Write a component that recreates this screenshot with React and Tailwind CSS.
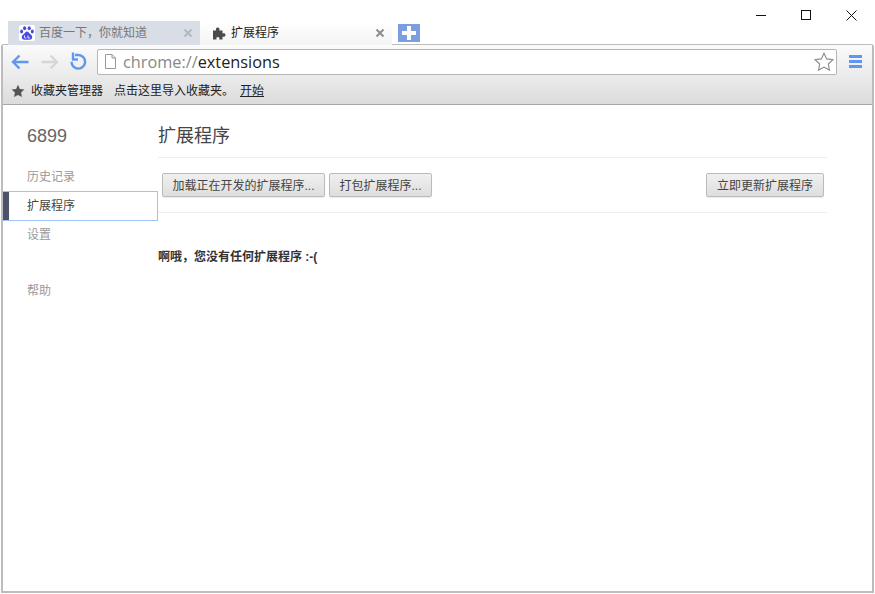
import React from "react";

const CJK = "font-['Liberation_Sans','Noto_Sans_CJK_SC',sans-serif]";

// Baidu paw favicon
const PawIcon = () => (
  <svg width="16" height="16" viewBox="0 0 16 16" className="shrink-0">
    <rect width="16" height="16" rx="2" fill="#fff" />
    <g fill="#4a4ae0">
      <ellipse cx="5.6" cy="3.2" rx="1.6" ry="2" />
      <ellipse cx="10.2" cy="3.2" rx="1.6" ry="2" />
      <ellipse cx="2.6" cy="6.6" rx="1.5" ry="2" />
      <ellipse cx="13.3" cy="6.6" rx="1.5" ry="2" />
      <path d="M8 6.6c-1.6 0-2 1.5-3.2 2.5C3.6 10 2.6 11 2.8 12.6 3 14.300 4.500 15 6 14.800c1.300-.2 2.700-.2 4 0 1.500.2 3-.5 3.200-2.200.2-1.600-.8-2.600-2-3.500C10 8.100 9.600 6.600 8 6.600z" />
    </g>
    <path d="M5.500 10.500v2.200c0 .7 1.900.7 1.900 0M9 10.500v2.500h2" fill="none" stroke="#fff" strokeWidth="0.9" />
  </svg>
);

const PuzzleIcon = () => (
  <svg width="14" height="14" viewBox="0 0 14 14" className="shrink-0">
    <path
      fill="#4a4a4a"
      d="M1 4.500h3.200C3.600 3.500 3.800 1.500 5.700 1.500S7.900 3.500 7.300 4.500h3.200v3c1-.6 3-.4 3 1.400s-2 2.100-3 1.500v3H7.200c.5-1 .2-2.300-1.300-2.300s-1.800 1.300-1.300 2.300H1z"
    />
  </svg>
);

const CloseX = ({ color }) => (
  <svg width="10" height="10" viewBox="0 0 10 10" className="shrink-0">
    <path d="M1.500 1.500l7 7M8.500 1.500l-7 7" stroke={color} strokeWidth="2" />
  </svg>
);

const Tab = ({ icon, title, active }) => (
  <div
    className={`w-[192px] h-[24px] flex items-center pr-[7px] ${
      active
        ? "pl-[12px] gap-[5px] bg-gradient-to-b from-white to-[#f4f4f4] text-[#222]"
        : "pl-[11px] gap-[4px] bg-[#d8dde6] text-[#777]"
    }`}
  >
    {icon}
    <span className="flex-1 text-[12px] leading-none">{title}</span>
    <CloseX color={active ? "#8d8d8d" : "#b4b8bf"} />
  </div>
);

const SideItem = ({ children, active }) =>
  active ? (
    <div className="h-[30px] w-[155px] flex border border-[#9cc2f7] border-l-0 bg-white">
      <div className="w-[6px] bg-[#4d5366]" />
      <span className="ml-[18px] text-[12px] leading-[29px] text-[#444]">{children}</span>
    </div>
  ) : (
    <div className="h-[28px] pl-[24px] text-[12px] leading-[28px] text-[#999]">{children}</div>
  );

const ActionButton = ({ children, width }) => (
  <button
    className={`${width} h-[24px] pt-[1px] border border-[#bbb] rounded-[2px] bg-gradient-to-b from-[#f0f0f0] to-[#dedede] text-[12px] leading-none text-[#444] shadow-[0_1px_1px_rgba(0,0,0,0.08)]`}
  >
    {children}
  </button>
);

export default function App() {
  return (
    <div className={`w-[875px] h-[594px] flex flex-col bg-white overflow-hidden ${CJK}`}>
      {/* title strip */}
      <div className="h-[44px] flex justify-between shrink-0">
        <div className="flex items-end pl-[8px] -mb-[1px] relative z-10">
          <Tab icon={<PawIcon />} title="百度一下，你就知道" />
          <Tab active icon={<PuzzleIcon />} title="扩展程序" />
          <div className="ml-[6px] mb-[3px] w-[22px] h-[18px] bg-[#7b9ee0] flex items-center justify-center">
            <svg width="14" height="14" viewBox="0 0 14 14">
              <path d="M5 0h4v5h5v4H9v5H5V9H0V5h5z" fill="#fff" />
            </svg>
          </div>
        </div>
        <div className="flex pt-[10px] pr-[18px] gap-[35px] items-start">
          <svg width="10" height="10" viewBox="0 0 10 10">
            <path d="M0 5.500h10" stroke="#111" strokeWidth="1" />
          </svg>
          <svg width="10" height="10" viewBox="0 0 10 10">
            <rect x="0.500" y="0.500" width="9" height="9" fill="none" stroke="#111" />
          </svg>
          <svg width="11" height="11" viewBox="0 0 11 11">
            <path d="M0.500 0.500l10 10M10.500 0.500l-10 10" stroke="#111" strokeWidth="1" />
          </svg>
        </div>
      </div>

      {/* browser window */}
      <div className="flex-1 mx-[1px] mb-[1px] border-2 border-t border-[#bcbcbc] rounded-t-[3px] flex flex-col min-h-0">
        <div className="h-[60px] shrink-0 bg-gradient-to-b from-[#fbfbfb] to-[#dcdcdc] border-b border-[#a8a8a8] flex flex-col">
          {/* nav row */}
          <div className="h-[33px] flex items-center pl-[7px]">
            <svg width="20" height="18" viewBox="0 0 20 18" className="shrink-0">
              <path d="M18.500 9H3M9.500 2.500L3 9l6.500 6.500" fill="none" stroke="#5f97f0" strokeWidth="2.400" />
            </svg>
            <svg width="20" height="18" viewBox="0 0 20 18" className="ml-[10px] shrink-0">
              <path d="M1.500 9H17M10.500 2.500L17 9l-6.500 6.500" fill="none" stroke="#d6d6d6" strokeWidth="2.400" />
            </svg>
            <svg width="20" height="20" viewBox="0 0 20 20" className="ml-[9px] shrink-0">
              <path d="M6 3h3.500a6.800 6.800 0 1 1-7 6.800" fill="none" stroke="#5f97f0" strokeWidth="2.400" />
              <path d="M4 0.500v7.500" stroke="#5f97f0" strokeWidth="2.400" />
              <path d="M3 7.500h6" stroke="#5f97f0" strokeWidth="2.400" />
            </svg>
            <div className="ml-[8px] w-[740px] h-[26px] bg-white border border-[#b5b5b5] rounded-[2px] flex items-center pl-[6px] pr-[2px]">
              <svg width="13" height="15" viewBox="0 0 13 15" className="shrink-0">
                <path d="M1.500 0.500h6.500l3.500 3.500v10.500h-10zM8 0.500v3.500h3.500" fill="#fff" stroke="#999" />
              </svg>
              <span className="ml-[6px] pt-[1px] flex-1 font-['Open_Sans',sans-serif] text-[16.3px] leading-none text-[#222]">
                <span className="text-[#888]">chrome://</span>extensions
              </span>
              <svg width="20" height="19" viewBox="0 0 20 19" className="shrink-0">
                <path d="M10 1.200l2.700 5.700 6.200.8-4.600 4.300 1.200 6.100L10 15.100l-5.500 3 1.200-6.100L1.100 7.700l6.200-.8z" fill="#fff" stroke="#8a8a8a" strokeWidth="1.100" />
              </svg>
            </div>
            <div className="ml-[12px] w-[13px] flex flex-col gap-[2px]">
              <div className="h-[3px] bg-[#5f97f0]" />
              <div className="h-[3px] bg-[#5f97f0]" />
              <div className="h-[3px] bg-[#5f97f0]" />
            </div>
          </div>
          {/* bookmarks row */}
          <div className="flex-1 flex items-center pl-[8px] text-[12px] leading-none text-[#222]">
            <svg width="14" height="14" viewBox="0 0 14 14" className="shrink-0">
              <path d="M7 0.800l1.900 4.100 4.500.6-3.300 3.100.8 4.500L7 10.900l-3.900 2.200.8-4.500L.6 5.500l4.500-.6z" fill="#555" />
            </svg>
            <span className="ml-[6px]">收藏夹管理器</span>
            <span className="ml-[11px]">点击这里导入收藏夹。</span>
            <span className="ml-[6px] underline">开始</span>
          </div>
        </div>

        {/* page body */}
        <div className="flex-1 flex min-h-0 bg-white">
          <aside className="w-[155px] shrink-0 pt-[19px]">
            <div className="h-[24px] pl-[24px] text-[18px] leading-[24px] text-[#666]">6899</div>
            <div className="mt-[15px]">
              <SideItem>历史记录</SideItem>
              <SideItem active>扩展程序</SideItem>
              <SideItem>设置</SideItem>
              <div className="mt-[28px]">
                <SideItem>帮助</SideItem>
              </div>
            </div>
          </aside>
          <main className="w-[669px] pt-[19px]">
            <h1 className="h-[24px] text-[18px] leading-[24px] font-normal text-[#444]">扩展程序</h1>
            <div className="mt-[9px] border-t border-[#eee] border-b h-[56px] flex items-center justify-between pl-[4px] pr-[3px]">
              <div className="flex gap-[4px]">
                <ActionButton width="w-[163px]">加载正在开发的扩展程序...</ActionButton>
                <ActionButton width="w-[103px]">打包扩展程序...</ActionButton>
              </div>
              <ActionButton width="w-[118px]">立即更新扩展程序</ActionButton>
            </div>
            <p className="mt-[36px] text-[12px] leading-[16px] font-bold text-[#333]">啊哦，您没有任何扩展程序 :-(</p>
          </main>
        </div>
      </div>
    </div>
  );
}
